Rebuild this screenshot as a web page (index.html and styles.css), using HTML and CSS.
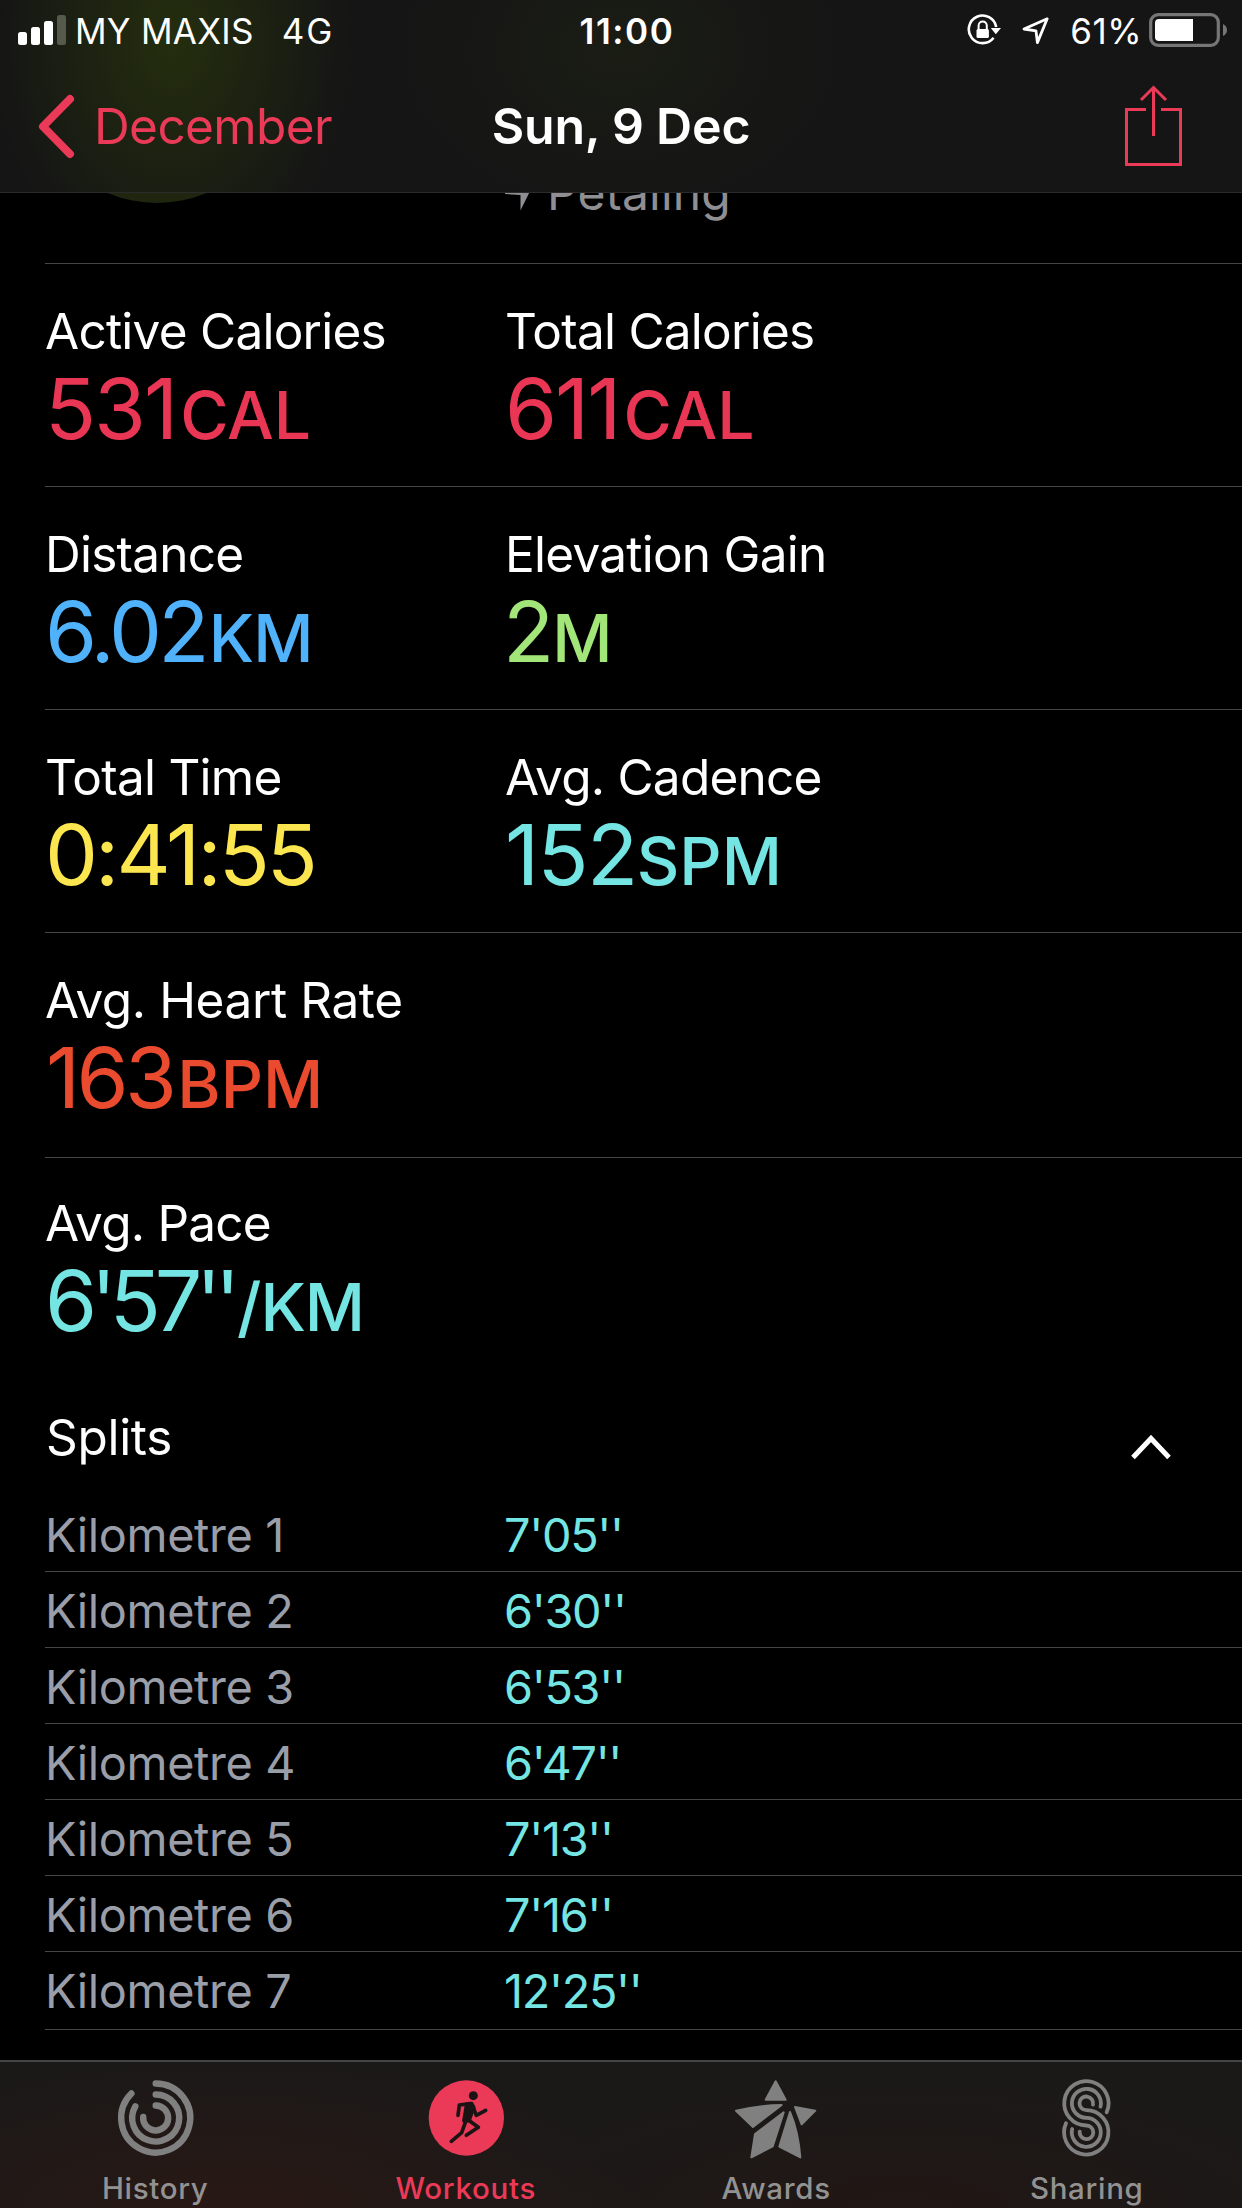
FILE: index.html
```html
<!DOCTYPE html>
<html lang="en">
<head>
  <meta charset="UTF-8">
  <meta name="viewport" content="width=device-width, initial-scale=1.0">
  <title>Sun, 9 Dec</title>
  <link rel="stylesheet" href="styles.css">
</head>
<body>
  <header class="top-bar">
    <div class="status-bar">
      <div class="carrier">
        <svg class="signal" width="50" height="32" viewBox="0 0 50 32">
          <rect x="0" y="18" width="9" height="13" rx="2.5"/>
          <rect x="13" y="13" width="9" height="18" rx="2.5"/>
          <rect x="26" y="7" width="9" height="24" rx="2.5"/>
          <rect class="off" x="39" y="1" width="9" height="30" rx="2.5"/>
        </svg>
        <span class="carrier-name">MY MAXIS</span>
        <span class="network">4G</span>
      </div>
      <div class="clock">11:00</div>
      <div class="indicators">
        <svg width="36" height="32" viewBox="0 0 36 32" fill="none" stroke="#fff">
          <path d="M26.6 23.7 A13.8 13.8 0 1 1 29.2 13" stroke-width="2.6"/>
          <path d="M23.8 14 H34 L28.8 20.2 Z" fill="#fff" stroke="none"/>
          <path d="M11.6 16 V11.5 A4.1 4.1 0 0 1 19.8 11.5 V16" stroke-width="2"/>
          <rect x="9.5" y="15" width="12.4" height="9" rx="1.6" fill="#fff" stroke="none"/>
        </svg>
        <svg class="location" width="30" height="32" viewBox="0 0 30 32" fill="none" stroke="#fff" stroke-width="2.8" stroke-linejoin="round">
          <path d="M26.2 4.8 L3 15 L15 16.8 L16.4 28.6 Z"/>
        </svg>
        <span class="percent">61%</span>
        <svg class="battery" width="80" height="36" viewBox="0 0 80 36">
          <rect x="1.7" y="1.7" width="67.6" height="30.6" rx="7.5" fill="none" stroke="#767676" stroke-width="3.2"/>
          <path d="M10 6 H44 V28 H10 Q6 28 6 24 V10 Q6 6 10 6 Z" fill="#fff"/>
          <path d="M74 11 Q78 13 78 17 Q78 21 74 23 Z" fill="#767676"/>
        </svg>
      </div>
    </div>
    <nav class="nav-bar">
      <a class="back">
        <svg width="40" height="68" viewBox="0 0 40 68" fill="none" stroke="#eb3a58" stroke-width="8" stroke-linecap="round" stroke-linejoin="round">
          <path d="M33 7 L6 34.5 L33 62"/>
        </svg>
        <span>December</span>
      </a>
      <h1>Sun, 9 Dec</h1>
      <svg class="share" width="58" height="84" viewBox="0 0 58 84" fill="none" stroke="#eb3a58" stroke-width="3">
        <path d="M21 26.5 H1.5 V81.5 H55.5 V26.5 H36"/>
        <path d="M28.5 53 V4"/>
        <path d="M16 17 L28.5 4.5 L41 17"/>
      </svg>
    </nav>
  </header>

  <main>
    <section class="summary">
      <div class="badge"></div>
      <div class="place">
        <svg width="32" height="30" viewBox="0 0 32 30"><path d="M30 0 L0 12 V13 L15.5 14 V29.5 Z" fill="#8e8e93"/></svg>
        <span>Petaling</span>
      </div>
    </section>

    <section class="stats">
      <div class="stat calories">
        <h2>Active Calories</h2>
        <p>531<span class="unit">CAL</span></p>
      </div>
      <div class="stat calories">
        <h2>Total Calories</h2>
        <p>611<span class="unit">CAL</span></p>
      </div>
    </section>
    <section class="stats">
      <div class="stat distance">
        <h2>Distance</h2>
        <p>6.02<span class="unit">KM</span></p>
      </div>
      <div class="stat elevation">
        <h2>Elevation Gain</h2>
        <p>2<span class="unit">M</span></p>
      </div>
    </section>
    <section class="stats">
      <div class="stat time">
        <h2>Total Time</h2>
        <p>0:41:55</p>
      </div>
      <div class="stat cadence">
        <h2>Avg. Cadence</h2>
        <p>152<span class="unit">SPM</span></p>
      </div>
    </section>
    <section class="stats stats-heart">
      <div class="stat heart">
        <h2>Avg. Heart Rate</h2>
        <p>163<span class="unit">BPM</span></p>
      </div>
    </section>
    <section class="stats stats-pace">
      <div class="stat pace">
        <h2>Avg. Pace</h2>
        <p>6'57''<span class="unit">/KM</span></p>
      </div>
    </section>

    <section class="splits">
      <div class="splits-header">
        <h2>Splits</h2>
        <svg width="42" height="28" viewBox="0 0 42 28" fill="none" stroke="#fff" stroke-width="5">
          <path d="M3 24.5 L21 5.5 L39 24.5"/>
        </svg>
      </div>
      <ul>
        <li><span>Kilometre 1</span><span class="split-time">7'05''</span></li>
        <li><span>Kilometre 2</span><span class="split-time">6'30''</span></li>
        <li><span>Kilometre 3</span><span class="split-time">6'53''</span></li>
        <li><span>Kilometre 4</span><span class="split-time">6'47''</span></li>
        <li><span>Kilometre 5</span><span class="split-time">7'13''</span></li>
        <li><span>Kilometre 6</span><span class="split-time">7'16''</span></li>
        <li><span>Kilometre 7</span><span class="split-time">12'25''</span></li>
      </ul>
    </section>
  </main>

  <footer class="tab-bar">
    <a class="tab">
      <svg width="90" height="84" viewBox="0 0 90 84" fill="none" stroke="#808080" stroke-width="6.4" stroke-linecap="round">
        <path d="M45.7 7.5 A34.5 34.5 0 1 1 21.4 17.5"/>
        <path d="M45.7 18.5 A23.5 23.5 0 1 1 25.3 30.3"/>
        <path d="M45.7 29.5 A12.5 12.5 0 1 1 33.2 41"/>
      </svg>
      <span>History</span>
    </a>
    <a class="tab active">
      <svg width="90" height="84" viewBox="2 12 270 252" fill="none" stroke="#1c1414" stroke-width="11" stroke-linecap="round" stroke-linejoin="round">
        <circle cx="138" cy="138" r="113" fill="#eb3a58" stroke="none"/>
        <circle cx="159" cy="71" r="13.5" fill="#1c1414" stroke="none"/>
        <path d="M113 130 L117 99 L150 95"/>
        <path d="M139 97 L154 95 L160 106 L146 146 L131 146 Z" fill="#1c1414"/>
        <path d="M158 104 L168 130 L196 115"/>
        <path d="M137 146 L124 182 L93 208"/>
        <path d="M144 144 L174 166 L138 190"/>
      </svg>
      <span>Workouts</span>
    </a>
    <a class="tab">
      <svg width="90" height="84" viewBox="34 18 270 252" fill="#808080" stroke="#808080" stroke-width="6" stroke-linejoin="round">
        <path d="M168 34 L138 89 L198 89 Z"/>
        <path d="M49 122 Q115 106 186 105 L100 171 Z"/>
        <path d="M192 127 L106 192 L95 262 L159 229 Z"/>
        <path d="M211 126 L179 230 L242 262 Q236 185 211 126 Z"/>
        <path d="M226 111 L287 122 L246 163 Z"/>
      </svg>
      <span>Awards</span>
    </a>
    <a class="tab">
      <svg width="90" height="84" viewBox="5 18 270 252" fill="none" stroke="#808080" stroke-width="11.5" stroke-linecap="round">
        <path d="M199 127 A66.5 66.5 0 1 0 138 166.5 A20.5 20.5 0 1 1 118 185"/>
        <path d="M180.5 110 A43.5 43.5 0 1 0 138 143.5 A43.5 43.5 0 1 1 95.5 177"/>
        <path d="M158 104 A20.5 20.5 0 1 0 138 120.5 A66.5 66.5 0 1 1 77 160"/>
      </svg>
      <span>Sharing</span>
    </a>
  </footer>
</body>
</html>
```
FILE: styles.css
```css
* {
  box-sizing: border-box;
  margin: 0;
  padding: 0;
}

body {
  width: 1242px;
  height: 2208px;
  display: flex;
  flex-direction: column;
  overflow: hidden;
  background: #000;
  color: #fff;
  font-family: Inter, "Liberation Sans", sans-serif;
  font-size: 49.5px;
}

h1, h2 {
  font-weight: 400;
  font-size: inherit;
}

svg {
  display: block;
  flex: none;
}

/* top bar */
.top-bar {
  height: 193px;
  flex: none;
  border-bottom: 1px solid #2b2b2b;
  background:
    radial-gradient(ellipse 180px 240px at 172px 40px, rgba(40, 52, 12, 0.8), rgba(36, 46, 14, 0.45) 55%, transparent),
    radial-gradient(ellipse 220px 160px at 620px 50px, rgba(30, 34, 20, 0.6), transparent),
    #151515;
}

.status-bar {
  height: 62px;
  display: grid;
  grid-template-columns: 1fr auto 1fr;
  font-size: 35px;
  line-height: 63px;
}

.carrier {
  display: flex;
  padding-left: 18px;
}

.signal {
  margin-top: 14px;
  fill: #fff;
}

.signal .off {
  fill: #555a4c;
}

.carrier-name {
  margin-left: 7px;
  letter-spacing: 0.25px;
}

.network {
  margin-left: 28px;
  letter-spacing: 2px;
}

.clock {
  font-weight: 600;
  letter-spacing: 1.6px;
  padding-left: 12px;
}

.indicators {
  display: flex;
  justify-content: flex-end;
  padding-right: 13px;
}

.indicators svg {
  margin-top: 14px;
}

.indicators .location {
  margin-left: 18px;
}

.percent {
  margin-left: 19px;
  letter-spacing: 0.5px;
}

.indicators .battery {
  margin-top: 13px;
  margin-left: 7px;
}

.nav-bar {
  height: 130px;
  display: grid;
  grid-template-columns: 1fr auto 1fr;
  line-height: 128px;
  color: #eb3a58;
}

.back {
  display: flex;
  padding-left: 37px;
  letter-spacing: -0.6px;
}

.back svg {
  margin-top: 30px;
}

.back span {
  margin-left: 17px;
}

.nav-bar h1 {
  color: #fff;
  font-size: 50px;
  font-weight: 600;
  letter-spacing: -0.2px;
}

.share {
  justify-self: end;
  margin: 21px 59px 0 0;
}

/* workout details */
main {
  flex: 1;
  overflow: hidden;
  padding-left: 45px;
}

.summary {
  height: 71px;
  display: grid;
  grid-template-columns: 460px 1fr;
  align-items: start;
  border-bottom: 1px solid #454545;
}

.badge {
  width: 252px;
  height: 252px;
  margin: -242px 0 0 -14px;
  border-radius: 50%;
  background: #1f2610;
}

.place {
  display: flex;
  margin-top: -30px;
  color: #8e8e93;
  font-size: 48px;
  line-height: 59px;
  letter-spacing: 0.2px;
}

.place svg {
  margin-top: 18px;
}

.place span {
  margin-left: 10px;
}

.stats {
  height: 223px;
  display: grid;
  grid-template-columns: 460px 1fr;
  padding-top: 37px;
  border-bottom: 1px solid #454545;
}

.stats-heart {
  height: 225px;
}

.stats-pace {
  padding-top: 35px;
  border-bottom: none;
}

.stat h2,
.splits h2 {
  line-height: 60px;
  letter-spacing: -0.75px;
}

.stat p {
  margin-top: 3px;
  font-size: 84px;
  line-height: 90px;
}

.unit {
  margin-left: 4px;
  font-size: 66px;
  font-weight: 500;
  line-height: 1;
  letter-spacing: 0;
}

.calories p {
  color: #e93654;
  letter-spacing: -2px;
}

.distance p {
  color: #50b2fb;
  letter-spacing: -3.7px;
}

.elevation p {
  color: #a2e578;
  margin-left: -2px;
}

.elevation .unit {
  margin-left: -2px;
}

.time p {
  color: #fbe650;
  letter-spacing: -2.9px;
}

.cadence p {
  color: #74e5e2;
  letter-spacing: -1.6px;
}

.cadence .unit {
  margin-left: 0;
}

.stat.heart h2 {
  letter-spacing: -0.4px;
}

.heart p {
  color: #ea4a2e;
  margin-left: 1px;
  letter-spacing: -3.6px;
}

.pace p {
  color: #74e5e2;
  letter-spacing: -6.2px;
}

.distance .unit,
.pace .unit {
  margin-left: 3px;
  letter-spacing: -1px;
}

/* splits */
.splits-header {
  height: 115px;
  display: flex;
  justify-content: space-between;
  padding: 26px 70px 0 1px;
}

.splits-header svg {
  margin-top: 26px;
}

.splits .splits-header h2 {
  letter-spacing: -0.3px;
}

.splits ul {
  list-style: none;
  color: #9a9ea8;
  font-size: 46.8px;
}

.splits li {
  height: 76px;
  display: grid;
  grid-template-columns: 459px 1fr;
  padding-top: 2px;
  line-height: 74px;
  letter-spacing: -0.35px;
  border-bottom: 1px solid #454545;
}

.splits li:last-child {
  height: 78px;
}

.split-time {
  color: #74e5e2;
  letter-spacing: -1.3px;
}

/* tab bar */
.tab-bar {
  height: 148px;
  flex: none;
  display: grid;
  grid-template-columns: repeat(4, 1fr);
  border-top: 2px solid #454545;
  background:
    radial-gradient(ellipse 420px 150px at 230px 150px, rgba(46, 24, 20, 0.75), transparent),
    radial-gradient(ellipse 420px 130px at 900px 150px, rgba(38, 22, 18, 0.6), transparent),
    #1b1918;
}

.tab {
  display: flex;
  flex-direction: column;
  align-items: center;
  padding-top: 14px;
  color: #929292;
  font-size: 29.5px;
  font-weight: 450;
  line-height: 40px;
  letter-spacing: 0.7px;
}

.tab span {
  margin-top: 8px;
}

.tab.active {
  color: #eb3a58;
}
```
